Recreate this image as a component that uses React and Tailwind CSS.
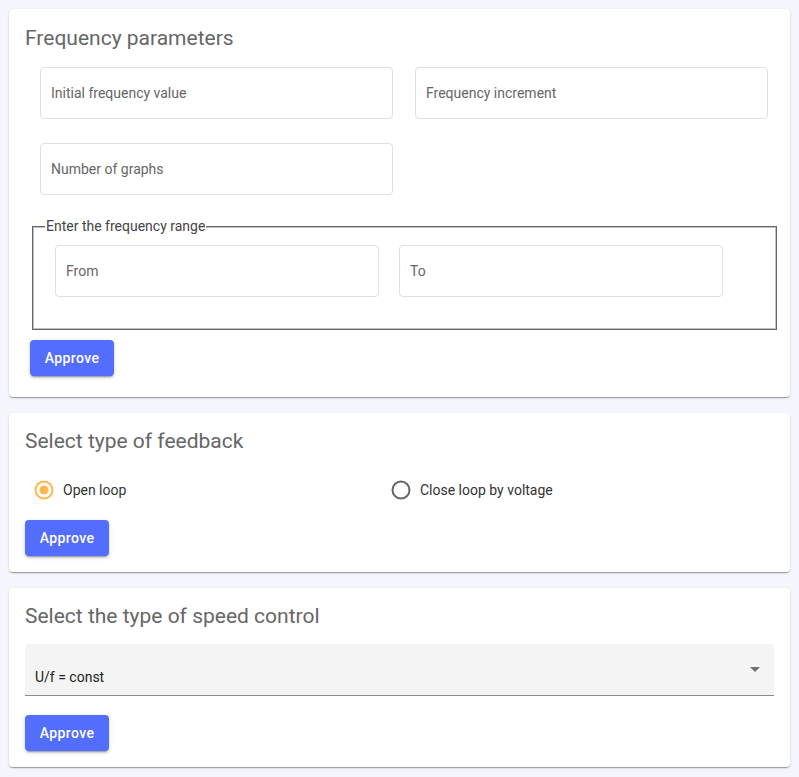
import React from "react";

const cardShadow =
  "shadow-[0px_2px_1px_-1px_rgba(0,0,0,0.2),0px_1px_1px_0px_rgba(0,0,0,0.14),0px_1px_3px_0px_rgba(0,0,0,0.12)]";

function ApproveButton({ className = "" }) {
  return (
    <button
      className={
        "h-9 w-[84px] rounded bg-[#536dfe] text-[14px] font-medium tracking-[0.4px] text-white shadow-[0px_3px_1px_-2px_rgba(0,0,0,0.2),0px_2px_2px_0px_rgba(0,0,0,0.14),0px_1px_5px_0px_rgba(0,0,0,0.12)] " +
        className
      }
    >
      Approve
    </button>
  );
}

function Field({ label, className = "" }) {
  return (
    <div
      className={
        "flex h-[52px] items-center rounded border border-[#e0e0e0] bg-white pl-[10px] text-[14px] text-[#666] " +
        className
      }
    >
      {label}
    </div>
  );
}

function Radio({ checked }) {
  const color = checked ? "#ffb74d" : "#666666";
  return (
    <svg width="20" height="20" viewBox="0 0 20 20" className="shrink-0">
      <circle cx="10" cy="10" r="8.5" fill="none" stroke={color} strokeWidth="2" />
      {checked && <circle cx="10" cy="10" r="4.6" fill={color} />}
    </svg>
  );
}

function Title({ children }) {
  return <h2 className="text-[21px] leading-[24px] font-normal text-[#666]">{children}</h2>;
}

export default function App() {
  return (
    <div
      className="min-h-[777px] bg-[#f4f5fd] p-[9px] pb-[10px]"
      style={{ fontFamily: "Roboto, 'Liberation Sans', sans-serif" }}
    >
      <div className="flex w-[781px] flex-col gap-4">
        {/* Card 1 */}
        <div className={"rounded bg-white px-4 pt-[17px] pb-[21px] " + cardShadow}>
          <Title>Frequency parameters</Title>
          <div className="mt-[17px] ml-[15px] grid w-[729px] grid-cols-[353px_353px] gap-x-[22px] gap-y-[24px]">
            <Field label="Initial frequency value" />
            <Field label="Frequency increment" />
            <Field label="Number of graphs" />
          </div>
          <fieldset className="mt-[23px] ml-[7px] w-[745px] border border-[#666] px-[12px] pb-[32px] shadow-[inset_0_0_0_1px_#c2c2c2]">
            <legend className="bg-white px-[1px] text-[14px] leading-[16px] text-[#444]">
              Enter the frequency range
            </legend>
            <div className="mt-[11px] ml-[10px] flex gap-[20px]">
              <Field label="From" className="w-[324px]" />
              <Field label="To" className="w-[324px]" />
            </div>
          </fieldset>
          <ApproveButton className="mt-[10px] ml-[5px]" />
        </div>

        {/* Card 2 */}
        <div className={"rounded bg-white px-4 pt-4 pb-4 " + cardShadow}>
          <Title>Select type of feedback</Title>
          <div className="mt-4 ml-[9px] flex h-[42px] items-center text-[14px] text-[#333]">
            <div className="flex w-[357px] items-center gap-[9px]">
              <Radio checked />
              <span>Open loop</span>
            </div>
            <div className="flex items-center gap-[9px]">
              <Radio />
              <span>Close loop by voltage</span>
            </div>
          </div>
          <ApproveButton className="mt-[9px]" />
        </div>

        {/* Card 3 */}
        <div className={"rounded bg-white px-4 pt-4 pb-4 " + cardShadow}>
          <Title>Select the type of speed control</Title>
          <div className="relative mt-4 h-[52px] rounded-t border-b border-[#8a8a8a] bg-[#f4f4f4] pt-[25px] pl-[10px] text-[14px] leading-[17px] text-[#222]">
            U/f = const
            <svg
              width="24"
              height="24"
              viewBox="0 0 24 24"
              className="absolute top-[13px] right-[7px]"
            >
              <path d="M7 10l5 5 5-5z" fill="rgba(0,0,0,0.54)" />
            </svg>
          </div>
          <ApproveButton className="mt-[19px]" />
        </div>
      </div>
    </div>
  );
}
